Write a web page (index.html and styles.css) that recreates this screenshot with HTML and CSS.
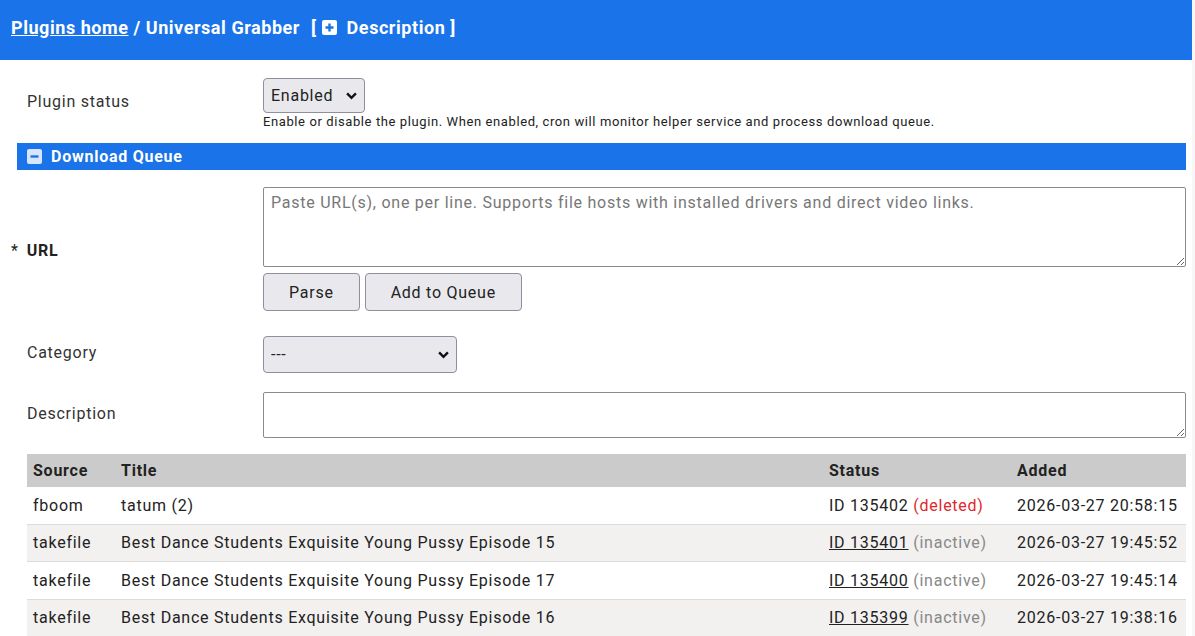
FILE: index.html
```html
<!DOCTYPE html>
<html lang="en">
<head>
    <meta charset="UTF-8">
    <meta name="viewport" content="width=device-width, initial-scale=1.0">
    <title>Universal Grabber</title>
    <link rel="stylesheet" href="styles.css">
</head>
<body>

    <div class="topbar">
        <a href="#" class="home-link">Plugins home</a> / Universal Grabber <span class="desc-toggle">[ <svg class="box-icon" viewBox="0 0 15 15" width="15" height="15"><rect width="15" height="15" rx="2" fill="#fff"/><path d="M7.5 3.5v8M3.5 7.5h8" stroke="#1a73e8" stroke-width="2.4"/></svg> Description ]</span>
    </div>

    <div class="page">
        <div class="row status-row">
            <label for="plugin-status">Plugin status</label>
            <div class="field">
                <span class="select-wrap">
                    <select id="plugin-status" class="select">
                        <option>Enabled</option>
                        <option>Disabled</option>
                    </select>
                    <svg class="chevron" viewBox="0 0 10 7" width="11" height="8"><path d="M1 1.2l4 4 4-4" fill="none" stroke="#111" stroke-width="2.2"/></svg>
                </span>
                <div class="help">Enable or disable the plugin. When enabled, cron will monitor helper service and process download queue.</div>
            </div>
        </div>

        <div class="section-bar">
            <svg class="box-icon" viewBox="0 0 15 15" width="15" height="15"><rect width="15" height="15" rx="2" fill="#d6e5fb"/><path d="M3.5 7.5h8" stroke="#1a73e8" stroke-width="2.4"/></svg>
            Download Queue
        </div>

        <div class="row url-row">
            <label for="url" class="required"><span class="star">*</span>URL</label>
            <div class="field">
                <textarea id="url" class="textarea url-box" placeholder="Paste URL(s), one per line. Supports file hosts with installed drivers and direct video links."></textarea>
                <div class="buttons">
                    <button class="btn">Parse</button>
                    <button class="btn">Add to Queue</button>
                </div>
            </div>
        </div>

        <div class="row category-row">
            <label for="category">Category</label>
            <div class="field">
                <span class="select-wrap">
                    <select id="category" class="select category-select">
                        <option>---</option>
                    </select>
                    <svg class="chevron" viewBox="0 0 10 7" width="11" height="8"><path d="M1 1.2l4 4 4-4" fill="none" stroke="#111" stroke-width="2.2"/></svg>
                </span>
            </div>
        </div>

        <div class="row desc-row">
            <label for="description">Description</label>
            <div class="field">
                <textarea id="description" class="textarea desc-box"></textarea>
            </div>
        </div>

        <table class="queue">
            <thead>
                <tr>
                    <th class="col-source">Source</th>
                    <th class="col-title">Title</th>
                    <th class="col-status">Status</th>
                    <th class="col-added">Added</th>
                </tr>
            </thead>
            <tbody>
                <tr>
                    <td>fboom</td>
                    <td>tatum (2)</td>
                    <td>ID 135402 <span class="deleted">(deleted)</span></td>
                    <td>2026-03-27 20:58:15</td>
                </tr>
                <tr>
                    <td>takefile</td>
                    <td>Best Dance Students Exquisite Young Pussy Episode 15</td>
                    <td><a href="#">ID 135401</a> <span class="inactive">(inactive)</span></td>
                    <td>2026-03-27 19:45:52</td>
                </tr>
                <tr>
                    <td>takefile</td>
                    <td>Best Dance Students Exquisite Young Pussy Episode 17</td>
                    <td><a href="#">ID 135400</a> <span class="inactive">(inactive)</span></td>
                    <td>2026-03-27 19:45:14</td>
                </tr>
                <tr>
                    <td>takefile</td>
                    <td>Best Dance Students Exquisite Young Pussy Episode 16</td>
                    <td><a href="#">ID 135399</a> <span class="inactive">(inactive)</span></td>
                    <td>2026-03-27 19:38:16</td>
                </tr>
            </tbody>
        </table>
    </div>

</body>
</html>
```

FILE: styles.css
```css
html { background: #f7f7f7; }
body { margin: 0; width: 1192px; min-height: 100vh; background: #fff; font-family: Roboto, "Liberation Sans", sans-serif; font-size: 16px; color: #333; letter-spacing: 0.75px; }

.topbar { height: 60px; line-height: 56px; background: #1a73e8; color: #fff; font-size: 18px; font-weight: 700; padding-left: 11px; letter-spacing: 0.55px; white-space: nowrap; }
.topbar .home-link { color: #fff; text-decoration: underline; }
.desc-toggle { margin-left: 6px; }
.desc-toggle .box-icon { vertical-align: -1px; margin-right: 5px; }

.page { padding: 0 6px 0 17px; }

.row { display: grid; grid-template-columns: 236px 1fr; align-items: center; padding-left: 10px; }
.row label { padding-bottom: 4px; }
.status-row { padding-top: 18px; }
.url-row { margin-top: 17px; }
.url-row label { padding: 3px 0 0; }
.category-row { margin-top: 25px; }
.desc-row { margin-top: 19px; }

.required { font-weight: 700; color: #222; }
.required .star { margin-left: -16px; margin-right: 8px; font-weight: 400; }

.help { font-size: 13px; color: #222; margin-top: 1px; letter-spacing: 0.6px; }

.select-wrap { position: relative; display: inline-block; vertical-align: top; }
.select { appearance: none; -webkit-appearance: none; font-family: inherit; font-size: 16px; letter-spacing: inherit; color: #222; background: #e9e9ed; border: 1px solid #8f8f9d; border-radius: 4px; height: 35px; padding: 0 25px 0 7px; }
.category-select { width: 194px; height: 37px; }
.chevron { position: absolute; right: 8px; top: 50%; margin-top: -4px; pointer-events: none; }

.section-bar { margin-top: 14px; height: 27px; background: #1a73e8; color: #fff; font-weight: 700; display: flex; align-items: center; padding-left: 10px; gap: 9px; }

.textarea { display: block; width: 100%; box-sizing: border-box; font-family: inherit; font-size: 16px; letter-spacing: inherit; color: #222; border: 1px solid #8a8a8a; border-radius: 2px; padding: 5px 7px; resize: vertical; }
.textarea::placeholder { color: #777; }
.url-box { height: 80px; }
.desc-box { height: 46px; }

.buttons { display: flex; gap: 5px; margin-top: 6px; }
.btn { height: 38px; font-family: inherit; font-size: 16px; letter-spacing: inherit; color: #222; background: #e9e9ed; border: 1px solid #8f8f9d; border-radius: 4px; padding: 0 25px; }

.queue { margin: 16px 0 0 10px; width: calc(100% - 10px); border-collapse: collapse; color: #222; }
.queue th { background: #cbcbcb; text-align: left; font-weight: 700; height: 33px; padding: 0 6px; }
.queue td { height: 36.5px; padding: 0 6px; border-bottom: 1px solid #dcdcdc; }
.queue tbody tr:nth-child(even) td { background: #f2f1f0; }
.queue a { color: #222; }
.col-source { width: 76px; }
.col-status { width: 176px; }
.col-added { width: 163px; }
.deleted { color: #e0262c; }
.inactive { color: #888; }
```
